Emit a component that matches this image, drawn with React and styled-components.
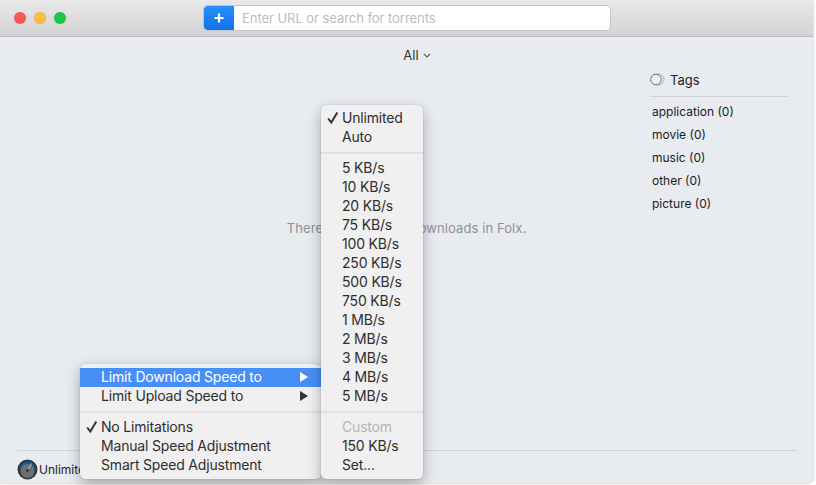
import React from 'react';
import styled, { createGlobalStyle } from 'styled-components';

const Global = createGlobalStyle`
  html, body { margin: 0; padding: 0; background: #fff; }
  body { width: 816px; height: 485px; overflow: hidden; font-family: Inter, "Liberation Sans", sans-serif; }
  * { box-sizing: border-box; }
`;

const Window = styled.div`
  position: relative;
  width: 813px;
  height: 483px;
  background: #e8ebf0;
  border-radius: 0 0 5px 0;
  box-shadow: 0 0 3px rgba(0,0,0,.3);
  display: flex;
  flex-direction: column;
  overflow: hidden;
`;
const TitleBar = styled.header`
  height: 37px;
  flex: none;
  display: flex;
  align-items: center;
  background: linear-gradient(#e9e9e9, #d3d3d3);
  border-bottom: 1px solid #b9b9b9;
  padding-left: 14px;
`;
const Lights = styled.div`
  display: flex;
  gap: 8px;
  margin-top: -1px;
`;
const Light = styled.span`
  width: 12px;
  height: 12px;
  border-radius: 50%;
  background: ${p => p.$c};
  box-shadow: inset 0 0 0 .5px rgba(0,0,0,.1);
`;
const SearchBox = styled.div`
  margin-left: 138px;
  margin-top: -1px;
  width: 406px;
  height: 24px;
  display: flex;
  background: #fff;
  border-radius: 4px;
  box-shadow: 0 0 0 1px #c4c4c4;
  overflow: hidden;
`;
const AddButton = styled.div`
  width: 30px;
  display: flex;
  align-items: center;
  justify-content: center;
  background: linear-gradient(#2a8ffb, #0f72ec);
`;
const Placeholder = styled.div`
  padding-left: 8px;
  font-size: 13px;
  line-height: 24px;
  color: #bcbcbc;
  letter-spacing: -.05px;
`;
const Body = styled.main`
  flex: 1;
  min-height: 0;
  display: flex;
  flex-direction: column;
  padding: 0 16px 0 17px;
`;
const Content = styled.div`
  flex: 1;
  min-height: 0;
  display: flex;
`;
const Center = styled.div`
  width: 633px;
  display: flex;
  flex-direction: column;
  align-items: center;
`;
const Filter = styled.div`
  margin-top: 10px;
  margin-left: 167px;
  display: flex;
  align-items: center;
  gap: 4px;
  height: 16px;
  font-size: 13px;
  color: #333;
`;
const Empty = styled.div`
  margin-top: 157px;
  margin-left: 146px;
  font-size: 13px;
  letter-spacing: .08px;
  color: #8d9197;
  white-space: nowrap;
`;
const TagsPanel = styled.aside`
  width: 138px;
  padding-top: 34px;
`;
const TagsHead = styled.div`
  display: flex;
  align-items: center;
  gap: 5px;
  height: 26px;
  padding-bottom: 8px;
  border-bottom: 1px solid #d0d2d5;
  font-size: 13px;
  color: #222;
`;
const TagList = styled.ul`
  list-style: none;
  margin: 3px 0 0;
  padding: 0 0 0 2px;
`;
const Tag = styled.li`
  height: 23px;
  line-height: 23px;
  font-size: 12px;
  color: #1c1c1c;
`;
const StatusBar = styled.footer`
  height: 33px;
  flex: none;
  border-top: 1px solid #d0d2d5;
  padding-top: 5px;
  display: flex;
  align-items: center;
  gap: 1px;
  font-size: 12px;
  color: #222;
`;
const Menu = styled.div`
  position: absolute;
  left: ${p => p.$x}px;
  top: ${p => p.$y}px;
  width: ${p => p.$w}px;
  padding: 4px 0;
  background: #f0f0f0;
  border-radius: 5px;
  box-shadow: 0 0 1px rgba(0,0,0,.35), 0 5px 14px rgba(0,0,0,.3);
  font-size: 14px;
  letter-spacing: -.18px;
  color: #2e2e2e;
`;
const Item = styled.div`
  position: relative;
  height: 19px;
  line-height: 17px;
  padding-left: 21px;
  white-space: nowrap;
  background: ${p => p.$active ? '#478ff6' : 'transparent'};
  color: ${p => p.$active ? '#fff' : p.$off ? '#b5b5b5' : 'inherit'};
`;
const CheckMark = styled.svg`
  position: absolute;
  left: 6px;
  top: -1px;
`;
const Arrow = styled.svg`
  position: absolute;
  right: 13px;
  top: 4px;
`;
const Sep = styled.div`
  height: 2px;
  margin: 5px 0;
  background: #e0e0e0;
`;

const speeds = ['5 KB/s','10 KB/s','20 KB/s','75 KB/s','100 KB/s','250 KB/s','500 KB/s','750 KB/s','1 MB/s','2 MB/s','3 MB/s','4 MB/s','5 MB/s'];
const tags = ['application','movie','music','other','picture'];

const CheckIcon = () => (
  <CheckMark width="12" height="19" viewBox="0 0 12 19">
    <path d="M1.2 10.5 L4.3 14.5 L10.3 4.5" fill="none" stroke="#333" strokeWidth="2" />
  </CheckMark>
);

const Gauge = () => (
  <svg width="21" height="21" viewBox="0 0 21 21">
    <circle cx="10.5" cy="10.5" r="10" fill="#33363a" />
    <path d="M2.6 10.5 A7.9 7.9 0 0 1 18.4 10.5Z" fill="#14588c" />
    <circle cx="10.5" cy="12" r="7" fill="#6d6e72" />
    <path d="M10.5 11.5 L14.5 4.5" stroke="#aab2ba" strokeWidth="1.1" />
    <circle cx="10.5" cy="11.5" r="1.4" fill="#2d2d2f" />
  </svg>
);

export default function App() {
  return (
    <>
      <Global />
      <Window>
        <TitleBar>
          <Lights>
            <Light $c="#fc5753" />
            <Light $c="#fdbc40" />
            <Light $c="#1ac94a" />
          </Lights>
          <SearchBox>
            <AddButton>
              <svg width="10" height="10" viewBox="0 0 10 10"><path d="M5 0.5V9.5M0.5 5H9.5" stroke="#fff" strokeWidth="2.2" /></svg>
            </AddButton>
            <Placeholder>Enter URL or search for torrents</Placeholder>
          </SearchBox>
        </TitleBar>
        <Body>
          <Content>
            <Center>
              <Filter>
                All
                <svg width="8" height="5" viewBox="0 0 8 5"><path d="M.8.8 4 4 7.2.8" fill="none" stroke="#555" strokeWidth="1.1" /></svg>
              </Filter>
              <Empty>There are no active downloads in Folx.</Empty>
            </Center>
            <TagsPanel>
              <TagsHead>
                <svg width="15" height="13" viewBox="0 0 15 13">
                  <circle cx="8.5" cy="6.5" r="5.5" fill="#e8ebf0" stroke="#b4b4b4" />
                  <circle cx="6" cy="6.5" r="5.3" fill="#eceef2" stroke="#6f6f6f" />
                </svg>
                Tags
              </TagsHead>
              <TagList>
                {tags.map(t => <Tag key={t}>{t} (0)</Tag>)}
              </TagList>
            </TagsPanel>
          </Content>
          <StatusBar>
            <Gauge />
            Unlimited
          </StatusBar>
        </Body>
      </Window>
      <Menu $x={80} $y={364} $w={241}>
        <Item $active>Limit Download Speed to
          <Arrow width="8" height="10" viewBox="0 0 8 10"><path d="M0 0 L8 5 L0 10Z" fill="#fff" /></Arrow>
        </Item>
        <Item>Limit Upload Speed to
          <Arrow width="8" height="10" viewBox="0 0 8 10"><path d="M0 0 L8 5 L0 10Z" fill="#333" /></Arrow>
        </Item>
        <Sep />
        <Item><CheckIcon />No Limitations</Item>
        <Item>Manual Speed Adjustment</Item>
        <Item>Smart Speed Adjustment</Item>
      </Menu>
      <Menu $x={321} $y={105} $w={102}>
        <Item><CheckIcon />Unlimited</Item>
        <Item>Auto</Item>
        <Sep />
        {speeds.map((s, i) => <Item key={i}>{s}</Item>)}
        <Sep />
        <Item $off>Custom</Item>
        <Item>150 KB/s</Item>
        <Item>Set...</Item>
      </Menu>
    </>
  );
}
